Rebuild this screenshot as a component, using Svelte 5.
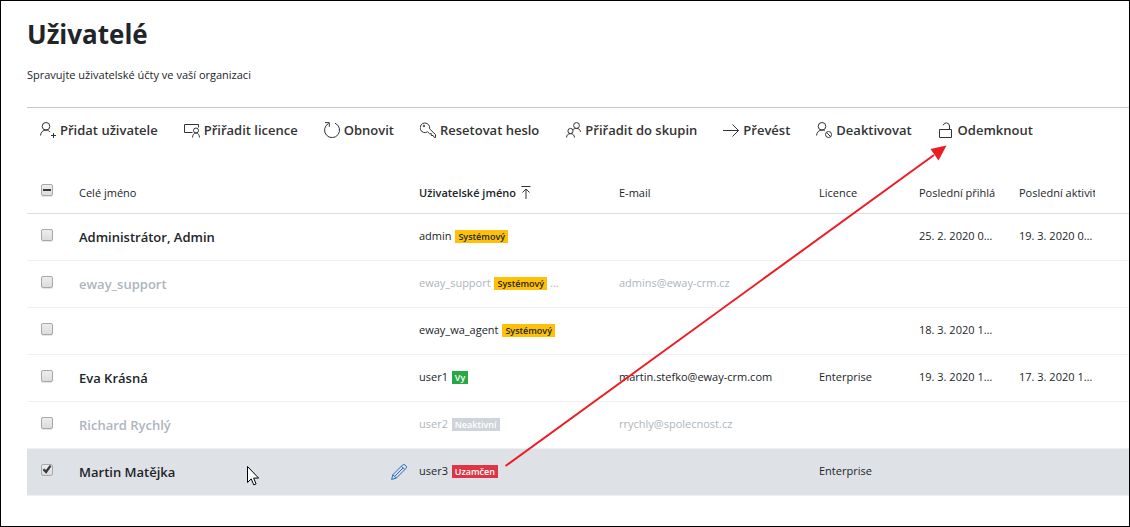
<script lang="ts">
	type Badge = { text: string; kind: string };

	const SYSTEM: Badge = { text: "Systémový", kind: "warning" };
	const YOU: Badge = { text: "Vy", kind: "success" };
	const INACTIVE: Badge = { text: "Neaktivní", kind: "secondary" };
	const LOCKED: Badge = { text: "Uzamčen", kind: "danger" };

	const actions = [
		{ icon: "add", label: "Přidat uživatele" },
		{ icon: "licence", label: "Přiřadit licence" },
		{ icon: "refresh", label: "Obnovit" },
		{ icon: "key", label: "Resetovat heslo" },
		{ icon: "group", label: "Přiřadit do skupin" },
		{ icon: "arrow", label: "Převést" },
		{ icon: "block", label: "Deaktivovat" },
		{ icon: "unlock", label: "Odemknout" }
	];

	let users = $state([
		{ name: "Administrátor, Admin", login: "admin", badges: [SYSTEM], email: "", licence: "", signed: "25. 2. 2020 09:12", active: "19. 3. 2020 08:40", checked: false },
		{ name: "eway_support", login: "eway_support", badges: [SYSTEM, INACTIVE], email: "admins@eway-crm.cz", licence: "", signed: "", active: "", muted: true, checked: false },
		{ name: "", login: "eway_wa_agent", badges: [SYSTEM], email: "", licence: "", signed: "18. 3. 2020 14:05", active: "", checked: false },
		{ name: "Eva Krásná", login: "user1", badges: [YOU], email: "martin.stefko@eway-crm.com", licence: "Enterprise", signed: "19. 3. 2020 10:31", active: "17. 3. 2020 15:22", checked: false },
		{ name: "Richard Rychlý", login: "user2", badges: [INACTIVE], email: "rrychly@spolecnost.cz", licence: "", signed: "", active: "", muted: true, checked: false },
		{ name: "Martin Matějka", login: "user3", badges: [LOCKED], email: "", licence: "Enterprise", signed: "", active: "", checked: true }
	]);

	let selected = $derived(users.filter((u) => u.checked).length);

	function toggleAll(e: Event) {
		const on = (e.target as HTMLInputElement).checked;
		users.forEach((u) => (u.checked = on));
	}
</script>

<main>
	<header>
		<h1>Uživatelé</h1>
		<p>Spravujte uživatelské účty ve vaší organizaci</p>
	</header>

	<div class="toolbar">
		{#each actions as { icon, label }}
			<button type="button">
				<svg class="icon" viewBox="0 0 16 16" aria-hidden="true">
					{#if icon === "add"}
						<circle cx="6" cy="4.3" r="3.8" />
						<path d="M.5 13.5c.3-3.3 2.5-5.400 5.500-5.400 1.700 0 3.200.700 4.200 2M13.500 11v5M11 13.500h5" />
					{:else if icon === "licence"}
						<path d="M8.5 10.500h-8v-8h14v3" />
						<circle cx="12" cy="8.5" r="2.5" />
						<path d="M8.5 15.500c.2-2.800 1.500-4.500 3.500-4.500s3.300 1.700 3.500 4.500" />
					{:else if icon === "refresh"}
						<path d="M4.5 1.5A7.5 7.5 0 1 0 11 1.2M1 .6h4.300v4.200" />
					{:else if icon === "key"}
						<path d="M7.6 9.800l1.900 1.900h1.800v1.800h1.800l1.200 2h1.200v-3l-5.900-5.600A4.800 4.800 0 1 0 7.600 9.800z" />
						<circle cx="4" cy="4" r=".8" />
					{:else if icon === "group"}
						<circle cx="11.5" cy="3.5" r="2.9" />
						<circle cx="5.5" cy="9" r="2.600" />
						<path d="M1.500 15.500c.2-2.400 1.700-3.900 4-3.900s3.800 1.500 4 3.900M7.900 7.900c.8-1 2-1.500 3.500-1.500 2.400 0 3.900 1.300 4.100 3.600" />
					{:else if icon === "arrow"}
						<path d="M0 8.500h15.500M9.500 2.500l6 6-6 6" />
					{:else if icon === "block"}
						<circle cx="6" cy="4.3" r="3.8" />
						<path d="M.5 13.500c.3-3.300 2.500-5.400 5.500-5.400 1 0 1.900.2 2.700.6M10.500 10.500l4.200 4.200" />
						<circle cx="12.5" cy="12.5" r="3" />
					{:else}
						<path d="M1.500 7.500h12v8h-12zM11.500 7.500V4A3.200 3.200 0 0 0 5.200 3.300" />
					{/if}
				</svg>
				{label}
			</button>
		{/each}
	</div>

	<table>
		<colgroup>
			<col class="col-check" />
			<col class="col-name" />
			<col class="col-wide" />
			<col class="col-wide" />
			<col class="col-small" />
			<col class="col-small" />
			<col class="col-small" />
			<col />
		</colgroup>
		<thead>
			<tr>
				<th class="check">
					<input
						type="checkbox"
						aria-label="Vybrat vše"
						checked={selected === users.length}
						indeterminate={selected > 0 && selected < users.length}
						onchange={toggleAll}
					/>
				</th>
				<th>Celé jméno</th>
				<th class="sorted" aria-sort="ascending">
					Uživatelské jméno
					<svg class="sort" viewBox="0 0 10 13" aria-hidden="true">
						<path d="M.5.5h9M5 13V3M1.5 6.500L5 3l3.500 3.500" />
					</svg>
				</th>
				<th>E-mail</th>
				<th>Licence</th>
				<th><div class="clip">Poslední přihlášení</div></th>
				<th><div class="clip">Poslední aktivita</div></th>
				<th></th>
			</tr>
		</thead>
		<tbody>
			{#each users as user}
				<tr class:muted={user.muted} class:selected={user.checked}>
					<td class="check">
						<input type="checkbox" aria-label={user.name || user.login} bind:checked={user.checked} />
					</td>
					<td class="name">
						<div>
							<span>{user.name}</span>
							{#if user.checked}
								<button type="button" class="edit" aria-label="Upravit">
									<svg viewBox="0 0 16 16" aria-hidden="true">
										<path d="M.6 15.400l1.300-4.700L11.700.9a1.500 1.500 0 0 1 2.200 0l1.200 1.200a1.500 1.500 0 0 1 0 2.200L5.300 14.100zM1.900 10.700l3.400 3.400M10.400 2.200l3.400 3.400M12.100 3.900L3.600 12.400" />
									</svg>
								</button>
							{/if}
						</div>
					</td>
					<td>
						{user.login}
						{#each user.badges as badge}
							<span class="badge {badge.kind}">{badge.text}</span>{" "}
						{/each}
					</td>
					<td>{user.email}</td>
					<td>{user.licence}</td>
					<td>{user.signed}</td>
					<td>{user.active}</td>
					<td></td>
				</tr>
			{/each}
		</tbody>
	</table>

	<!-- callout from the locked user to the unlock action -->
	<svg class="callout" viewBox="0 0 443 322" aria-hidden="true">
		<path d="M1.5 321L430 10" stroke="#ed1c24" stroke-width="2" />
		<path d="M442.5.5l-8 15-8-11.500z" fill="#ed1c24" />
	</svg>
	<svg class="pointer" viewBox="0 0 12 20" aria-hidden="true">
		<path d="M.5.5v16l3.700-3.600 2.600 6 2.300-1-2.500-5.800h5z" fill="#fff" stroke="#000" />
	</svg>
</main>

<style>
	:global(body) {
		margin: 0;
		background: #fff;
	}

	main {
		position: relative;
		box-sizing: border-box;
		min-height: 100vh;
		padding-left: 26px;
		border: 1px solid #000;
		overflow: hidden;
		color: #212529;
		font-family: "Segoe UI", "Open Sans", "Noto Sans", sans-serif;
		font-size: 11px;
		line-height: 18px;
	}

	header {
		padding: 15px 0 23px;
	}

	h1 {
		margin: 0 0 14px;
		font-size: 26px;
		line-height: 36px;
		font-weight: 700;
	}

	p {
		margin: 0;
	}

	.toolbar {
		display: flex;
		gap: 26px;
		padding: 11px 13px;
		border-top: 1px solid #c8c8c8;
	}

	.toolbar button {
		display: flex;
		align-items: center;
		gap: 4px;
		flex: none;
		padding: 0;
		border: 0;
		background: none;
		color: #333;
		font: inherit;
		font-size: 13px;
		line-height: 22px;
		font-weight: 600;
	}

	svg {
		fill: none;
		stroke: none;
	}

	.icon {
		width: 16px;
		height: 16px;
		stroke: #333;
	}

	table {
		width: 100%;
		margin-top: 18px;
		table-layout: fixed;
		border-collapse: collapse;
	}

	.col-check {
		width: 40px;
	}

	.col-name {
		width: 340px;
	}

	.col-wide {
		width: 200px;
	}

	.col-small {
		width: 100px;
	}

	th,
	td {
		box-sizing: border-box;
		padding: 0 12px 2px;
		border-bottom: 1px solid #f0f0f0;
		overflow: hidden;
		text-align: left;
		white-space: nowrap;
		font-weight: 400;
	}

	th {
		height: 43px;
		padding: 4px 12px 0;
		border-color: #dcdcdc;
	}

	td {
		height: 47px;
		text-overflow: ellipsis;
	}

	.clip {
		overflow: hidden;
	}

	.sorted {
		font-weight: 600;
	}

	.sort {
		width: 10px;
		height: 13px;
		margin-left: 2px;
		vertical-align: -2px;
		stroke: #333;
	}

	.check {
		padding: 0 14px 4px;
	}

	th.check {
		padding-bottom: 2px;
	}

	input {
		display: grid;
		place-items: center;
		box-sizing: border-box;
		appearance: none;
		width: 12px;
		height: 12px;
		margin: 0;
		border: 1px solid #a8a8a8;
		border-radius: 2px;
		background: linear-gradient(#ededed, #dcdcdc);
		box-shadow: 0 1px 1px #e4e4e4;
	}

	input:checked::before {
		content: "";
		width: 9px;
		height: 9px;
		background: #3a3a3a;
		clip-path: polygon(0 55%, 18% 38%, 38% 55%, 80% 0, 100% 14%, 42% 98%);
	}

	input:indeterminate::before {
		content: "";
		width: 8px;
		height: 2px;
		background: #3a3a3a;
		clip-path: none;
	}

	.name {
		padding: 0 0 0 12px;
		font-size: 13px;
		font-weight: 600;
	}

	.name div {
		display: flex;
		align-items: center;
		justify-content: space-between;
	}

	.edit {
		padding: 0;
		border: 0;
		background: none;
	}

	.edit svg {
		display: block;
		width: 16px;
		height: 16px;
		stroke: #2368c4;
	}

	.muted {
		color: #adb5bd;
	}

	.selected {
		background: #dee2e6;
	}

	.badge {
		display: inline-block;
		margin-left: 1px;
		padding: 2px 3px;
		font-size: 9px;
		line-height: 9px;
		font-weight: 600;
	}

	.warning {
		background: #ffc107;
		color: #212529;
	}

	.success {
		background: #28a745;
		color: #fff;
	}

	.secondary {
		background: #ced4da;
		color: #fff;
	}

	.danger {
		background: #dc3545;
		color: #fff;
	}

	.callout {
		position: absolute;
		left: 503px;
		top: 144px;
		width: 443px;
		height: 322px;
		pointer-events: none;
	}

	.pointer {
		position: absolute;
		left: 246px;
		top: 465px;
		width: 12px;
		height: 20px;
		pointer-events: none;
	}
</style>
